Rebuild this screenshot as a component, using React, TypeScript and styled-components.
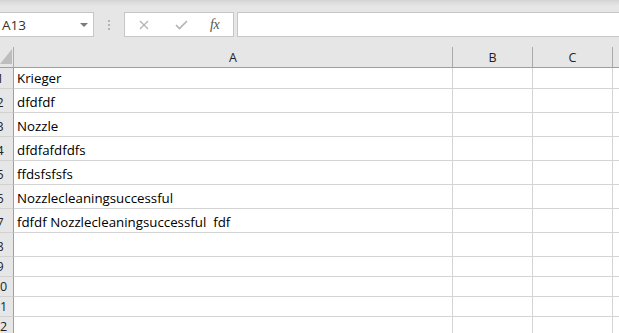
import React from 'react';
import styled, { createGlobalStyle } from 'styled-components';

const GlobalStyle = createGlobalStyle`
  html, body {
    margin: 0;
    padding: 0;
    background: #ffffff;
    overflow: hidden;
  }
  * { box-sizing: border-box; }
`;

const Window = styled.div`
  width: 619px;
  height: 333px;
  overflow: hidden;
  background: #e6e6e6;
  font-family: 'Open Sans', 'Liberation Sans', sans-serif;
  color: #222;
`;

const TopStrip = styled.div`
  height: 12px;
  background: linear-gradient(#d4d4d4 0px, #dedede 3px, #e6e6e6 6px);
`;

const FormulaBar = styled.div`
  display: flex;
  align-items: stretch;
  height: 25px;
`;

const NameBox = styled.div`
  width: 95px;
  margin-left: -1px;
  background: #fff;
  border: 1px solid #c6c6c6;
  display: flex;
  align-items: center;
  justify-content: space-between;
  padding: 0 5px 0 2px;
  font-size: 13.5px;
  color: #333;
`;

const Caret = styled.span`
  width: 0;
  height: 0;
  border-left: 4px solid transparent;
  border-right: 4px solid transparent;
  border-top: 4px solid #7b7b7b;
`;

const Grip = styled.div`
  width: 30px;
  display: flex;
  flex-direction: column;
  align-items: center;
  justify-content: center;
  gap: 2px;

  span {
    width: 2px;
    height: 2px;
    background: #b4b4b4;
  }
`;

const ActionGroup = styled.div`
  width: 110px;
  background: #fff;
  border: 1px solid #c6c6c6;
  display: flex;
  align-items: center;
  padding-left: 14px;
`;

const ActionButton = styled.div<{ $w: number }>`
  width: ${p => p.$w}px;
  display: flex;
  align-items: center;
  justify-content: flex-start;
`;

const Fx = styled.span`
  font-family: 'Liberation Serif', 'DejaVu Serif', serif;
  font-style: italic;
  font-size: 14px;
  color: #555;
  letter-spacing: -0.5px;
`;

const FormulaInput = styled.div`
  flex: 1;
  margin-left: 3px;
  margin-right: -2px;
  background: #fff;
  border: 1px solid #c6c6c6;
`;

const Sheet = styled.div`
  margin-top: 10px;
  margin-left: -13px;
  display: grid;
  grid-template-columns: 27px 439px 80px 80px 80px;
`;

const Corner = styled.div`
  height: 21px;
  border-right: 1px solid #ababab;
  border-bottom: 1px solid #9e9e9e;
  position: relative;

  &::after {
    content: '';
    position: absolute;
    right: 1px;
    bottom: 3px;
    width: 0;
    height: 0;
    border-left: 12px solid transparent;
    border-bottom: 15px solid #bdbdbd;
  }
`;

const ColHeader = styled.div`
  height: 21px;
  border-right: 1px solid #ababab;
  border-bottom: 1px solid #9e9e9e;
  display: flex;
  align-items: center;
  justify-content: center;
  font-size: 12.5px;
  color: #222;
  padding-top: 1px;
`;

const RowHeader = styled.div<{ $h: number }>`
  height: ${p => p.$h}px;
  background: #e6e6e6;
  border-right: 1px solid #9e9e9e;
  border-bottom: 1px solid #d0d0d0;
  display: flex;
  align-items: flex-end;
  justify-content: center;
  padding-bottom: 1px;
  font-size: 12.5px;
  color: #222;
`;

const Cell = styled.div<{ $h: number }>`
  height: ${p => p.$h}px;
  background: #fff;
  border-right: 1px solid #d4d4d4;
  border-bottom: 1px solid #d4d4d4;
  display: flex;
  align-items: flex-end;
  padding: 0 0 1px 3px;
  font-family: 'Open Sans', 'Liberation Sans', sans-serif;
  font-size: 13.3px;
  color: #000;
  white-space: pre;
`;

const values = [
  'Krieger',
  'dfdfdf',
  'Nozzle',
  'dfdfafdfdfs',
  'ffdsfsfsfs',
  'Nozzlecleaningsuccessful',
  'fdfdf Nozzlecleaningsuccessful  fdf',
  '', '', '', '', '',
];

const heights = [21, 24, 24, 24, 24, 24, 24, 24, 20, 20, 20, 20];

export default function App() {
  return (
    <Window>
      <GlobalStyle />
      <TopStrip />
      <FormulaBar>
        <NameBox>
          <span>A13</span>
          <Caret />
        </NameBox>
        <Grip>
          <span />
          <span />
          <span />
        </Grip>
        <ActionGroup>
          <ActionButton $w={36}>
            <svg width="10" height="10" viewBox="0 0 10 10">
              <path d="M1 1 L9 9 M9 1 L1 9" stroke="#b3b3b3" strokeWidth="1.3" fill="none" />
            </svg>
          </ActionButton>
          <ActionButton $w={35}>
            <svg width="13" height="10" viewBox="0 0 13 10">
              <path d="M1 5 L4.5 8.5 L12 1" stroke="#b3b3b3" strokeWidth="1.6" fill="none" />
            </svg>
          </ActionButton>
          <ActionButton $w={20}>
            <Fx>fx</Fx>
          </ActionButton>
        </ActionGroup>
        <FormulaInput />
      </FormulaBar>
      <Sheet>
        <Corner />
        <ColHeader>A</ColHeader>
        <ColHeader>B</ColHeader>
        <ColHeader>C</ColHeader>
        <ColHeader />
        {values.map((v, i) => (
          <React.Fragment key={i}>
            <RowHeader $h={heights[i]}>{i + 1}</RowHeader>
            <Cell $h={heights[i]}>{v}</Cell>
            <Cell $h={heights[i]} />
            <Cell $h={heights[i]} />
            <Cell $h={heights[i]} />
          </React.Fragment>
        ))}
      </Sheet>
    </Window>
  );
}
